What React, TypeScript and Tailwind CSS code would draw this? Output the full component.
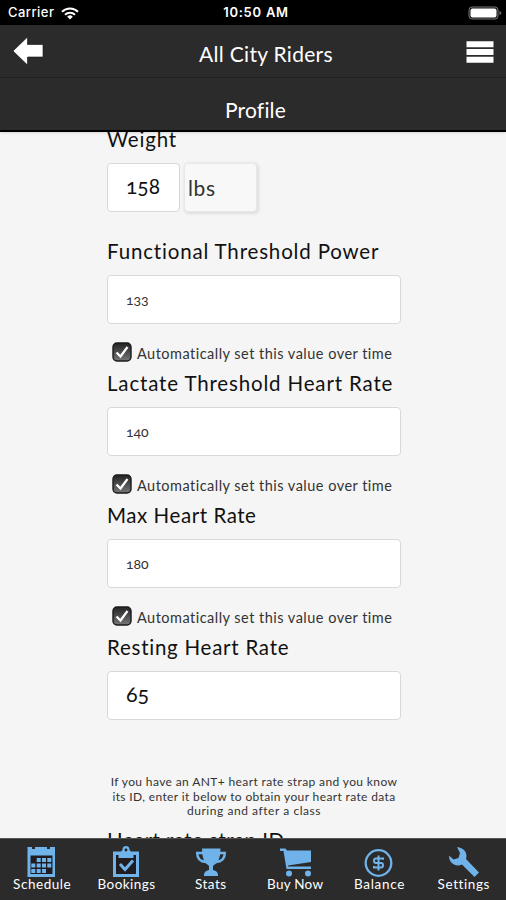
import type { ReactNode } from "react";

function Field({
  label,
  value,
  large = false,
  auto = false,
  labelClass,
}: {
  label: string;
  value: string;
  large?: boolean;
  auto?: boolean;
  labelClass: string;
}) {
  return (
    <section className={auto ? "h-[132px]" : "h-[80px]"}>
      <h2 className={"h-[35px] text-[20.5px] leading-[23px] whitespace-nowrap " + labelClass}>{label}</h2>
      <div
        className={
          "flex h-[49px] w-[294px] items-center rounded border border-[#d8d8d8] bg-white pl-[18px] oldstyle-nums " +
          (large ? "pb-[3px] text-[21.5px]" : "pb-px text-[14px] text-[#333]")
        }
      >
        {value}
      </div>
      {auto && (
        <div className="mt-[18px] flex h-5 items-center gap-1 pl-[5px]">
          <svg viewBox="0 0 20 20" className="h-5 w-5 shrink-0">
            <defs>
              <linearGradient id="box" x2="0" y2="1">
                <stop stopColor="#222" />
                <stop offset="1" stopColor="#777" />
              </linearGradient>
            </defs>
            <rect x="1" y="1" width="18" height="18" rx="4" fill="url(#box)" stroke="#1a1a1a" strokeWidth="1.4" />
            <path d="M4.5 10.5l4 4L15.5 5" fill="none" stroke="#fff" strokeWidth="2.2" />
          </svg>
          <span className="mt-[3px] ml-px text-[14.5px] leading-5 tracking-[0.48px] whitespace-nowrap text-[#333]">
            Automatically set this value over time
          </span>
        </div>
      )}
    </section>
  );
}

function Tab({ label, children, track }: { label: string; children: ReactNode; track: string }) {
  return (
    <div className="flex flex-1 flex-col items-center pt-2">
      <svg viewBox="0 0 30 30" className="h-[30px] w-[30px] overflow-visible" fill="#6fb3ea">
        {children}
      </svg>
      <span className={"text-[13.5px] leading-[15px] whitespace-nowrap text-white " + track}>{label}</span>
    </div>
  );
}

export default function App() {
  return (
    <div className="flex h-[900px] w-[506px] flex-col overflow-hidden bg-[#f5f5f5] font-['Lato',sans-serif] text-[#111]">
      <div className="grid h-[25px] shrink-0 grid-cols-3 items-center bg-black px-2 pt-px font-['Inter',sans-serif] text-[13px] text-white">
        <div className="flex items-center gap-[7px]">
          <span className="font-medium tracking-[0.45px]">Carrier</span>
          <svg viewBox="0 0 18 13" className="h-[13px] w-[18px]" fill="none" stroke="#fff" strokeWidth="2">
            <path d="M1 4.7a11.5 11.5 0 0 1 16 0M4 7.8a7 7 0 0 1 10 0" />
            <path d="M9 12.500L6.200 9.700a4 4 0 0 1 5.600 0z" fill="#fff" stroke="none" />
          </svg>
        </div>
        <span className="pl-1.5 text-center font-semibold tracking-[0.75px] whitespace-nowrap">10:50 AM</span>
        <svg viewBox="0 0 34 14" className="-mr-1 h-[14px] w-[34px] justify-self-end">
          <rect x="1" y="1" width="29" height="12" rx="3" fill="#111" stroke="#777" />
          <rect x="2.500" y="2.500" width="26" height="9" rx="2" fill="#fff" />
          <path d="M31.500 5v4q1.800-.7 1.800-2t-1.800-2z" fill="#777" />
        </svg>
      </div>
      <header className="flex h-[53px] shrink-0 items-center justify-between border-b border-[#222] bg-[#2b2b2b] pr-3 pl-3 text-white">
        <svg viewBox="0 0 32 30" className="h-[30px] w-8">
          <path d="M1 15L15.500 1v7.500H31v12.500H15.500V29z" fill="#fff" stroke="#111" strokeWidth=".6" />
        </svg>
        <h1 className="mt-1.5 pl-[22px] text-[21px] tracking-[0.3px]">All City Riders</h1>
        <svg viewBox="0 0 28 24" className="mt-0.5 h-6 w-7" fill="#fff">
          <path d="M.5 1.200h27v6H.5zM.5 9h27v6H.5zM.5 16.800h27v6H.5z" />
        </svg>
      </header>
      <div className="flex h-[54px] shrink-0 items-center justify-center border-b-2 border-black bg-[#2b2b2b] pt-3 pl-[5px] text-[21px] tracking-[0.2px] text-white shadow-sm">
        Profile
      </div>

      <main className="min-h-0 flex-1 overflow-hidden pl-[107px]">
        <div className="-mt-[5px]">
          <h2 className="h-9 text-[20.5px] leading-6 tracking-[0.8px]">Weight</h2>
          <div className="flex h-[77px] items-start gap-[5px]">
            <div className="flex h-[49px] w-[73px] items-center rounded border border-[#d8d8d8] bg-white pb-[3px] pl-[18px] text-[21px] oldstyle-nums">
              158
            </div>
            <div className="-ml-px flex h-[49px] w-[73px] items-center rounded-sm border border-[#e8e8e8] bg-[#f8f8f8] pl-[3px] text-[21px] tracking-[0.6px] text-[#333] shadow-[1px_1px_3px_1px_#ddd]">
              lbs
            </div>
          </div>
          <Field label="Functional Threshold Power" value="133" auto labelClass="tracking-[0.83px]" />
          <Field label="Lactate Threshold Heart Rate" value="140" auto labelClass="tracking-[0.84px]" />
          <Field label="Max Heart Rate" value="180" auto labelClass="tracking-[0.56px]" />
          <Field label="Resting Heart Rate" value="65" large labelClass="tracking-[0.75px]" />
          <div className="mt-[59px] h-[53px] w-[294px] text-center text-[12px] leading-[14.6px] whitespace-nowrap text-[#333]">
            <p className="tracking-[0.38px]">If you have an ANT+ heart rate strap and you know</p>
            <p className="tracking-[0.37px]">its ID, enter it below to obtain your heart rate data</p>
            <p className="tracking-[0.55px]">during and after a class</p>
          </div>
          <h2 className="text-[20.5px] leading-6 tracking-[0.45px]">Heart rate strap ID</h2>
        </div>
      </main>

      <footer className="flex h-[62px] shrink-0 border-t border-[#555] bg-[#2b2b2b]">
        <Tab label="Schedule" track="tracking-[0.55px]">
          <path d="M.5 0h4.500v2h3V0h12v2h3V0H28v30H.5z" />
          <path d="M3.500 8.500h22v18.500h-22z" fill="#201c20" />
          <path d="M9.700 11h4v4h-4zM15 11h4v4h-4zM20.300 11h4v4h-4zM4.300 16.500h4v4h-4zM9.700 16.500h4v4h-4zM15 16.500h4v4h-4zM20.300 16.500h4v4h-4zM4.300 22h4v4h-4zM9.700 22h4v4h-4zM15 22h4v4h-4z" />
        </Tab>
        <Tab label="Bookings" track="tracking-[0.45px]">
          <path d="M2 4.500h8q1.500-1 1.500-2a3.500 3.500 0 0 1 7 0q0 1 1.500 2h8V30H2z" />
          <path d="M5 8h2.500v3h15V8H25v19H5z" fill="#201c20" />
          <circle cx="15" cy="3" r="1.400" fill="#201c20" />
          <path d="M9 17l5 5.500 8-9" fill="none" stroke="#6fb3ea" strokeWidth="3" />
        </Tab>
        <Tab label="Stats" track="tracking-[0.45px]">
          <path d="M6 1.500h18.500q0 13.500-6.500 16.500l-1 1v4q5 1 5 5v1H8v-1q0-4 5-5v-4l-1-1Q6 15 6 1.500z" />
          <path d="M7 6H1.200q0 8.500 9 9M23 6h5.800q0 8.500-9 9" fill="none" stroke="#6fb3ea" strokeWidth="2.500" />
        </Tab>
        <Tab label="Buy Now" track="tracking-[0.25px]">
          <path d="M0 1.500h5.500L7 3.500h24v11.500L8 18.500v1h23V22H6.500L3.500 4H0z" />
          <circle cx="9" cy="26.500" r="3" />
          <circle cx="28" cy="26.500" r="3" />
        </Tab>
        <Tab label="Balance" track="tracking-[0.7px]">
          <circle cx="14.500" cy="16" r="12.800" fill="none" stroke="#6fb3ea" strokeWidth="2.300" />
          <path d="M19 12.800v-1.300h-7q-2 0-2 2.200t2 2.200h5q2 0 2 2.300t-2 2.300h-7v-1.500M14.500 8.500v15" fill="none" stroke="#6fb3ea" strokeWidth="2" />
        </Tab>
        <Tab label="Settings" track="tracking-[0.6px]">
          <path d="M8 0Q15 1 17 6q1 3 0 6l13 13.500-4.500 4.500L13 17.500q-4 2-8 0Q0 15 0 8.500l4.500 4 5-1.500 1.500-5z" />
        </Tab>
      </footer>
    </div>
  );
}
